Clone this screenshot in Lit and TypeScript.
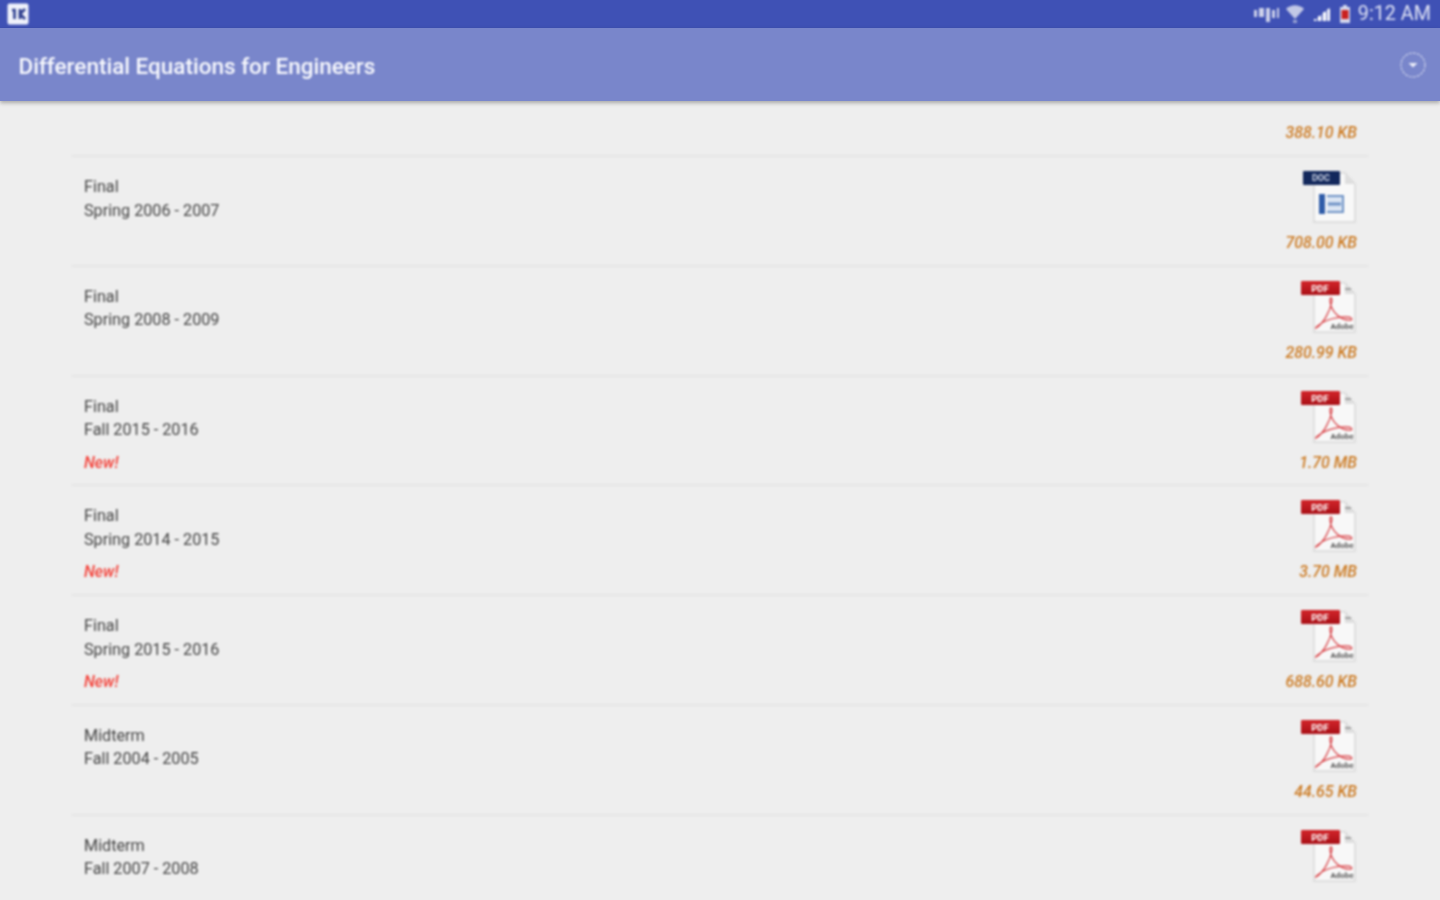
import { LitElement, html, css, svg } from "lit";
import { customElement } from "lit/decorators.js";

type Row = { kind: string; term: string; size: string; type: "pdf" | "doc"; isNew?: boolean };

const rows: Row[] = [
  { kind: "Final", term: "Spring 2006 - 2007", size: "708.00 KB", type: "doc" },
  { kind: "Final", term: "Spring 2008 - 2009", size: "280.99 KB", type: "pdf" },
  { kind: "Final", term: "Fall 2015 - 2016", size: "1.70 MB", type: "pdf", isNew: true },
  { kind: "Final", term: "Spring 2014 - 2015", size: "3.70 MB", type: "pdf", isNew: true },
  { kind: "Final", term: "Spring 2015 - 2016", size: "688.60 KB", type: "pdf", isNew: true },
  { kind: "Midterm", term: "Fall 2004 - 2005", size: "44.65 KB", type: "pdf" },
  { kind: "Midterm", term: "Fall 2007 - 2008", size: "", type: "pdf" },
];

const sheet = svg`
  <path d="M13 3H44L54 14V52H13Z" fill="#f8f8f8" stroke="#d8d8d8" stroke-width="1.4"/>
  <path d="M44 3V14H54Z" fill="#dedede"/>`;

const pdfIcon = html`<svg class="file" viewBox="0 0 56 54" aria-hidden="true">
  ${sheet}
  <defs>
    <linearGradient id="pdfband" x1="0" y1="0" x2="0" y2="1">
      <stop offset="0" stop-color="#d3262b"/>
      <stop offset="1" stop-color="#a90f16"/>
    </linearGradient>
  </defs>
  <rect x="0" y="1" width="39" height="14" rx="1" fill="url(#pdfband)"/>
  <text x="19" y="11.5" text-anchor="middle" font-size="9.5" font-weight="700" fill="#fff" font-family="Roboto, sans-serif">PDF</text>
  <path d="M44 9h6" stroke="#777" stroke-width="1.2"/>
  <path d="M15 48C22 44 29 32 31 21C31 17 29 17 29 21C30 32 40 41 50 40C52 39 50 37 46 37C38 36 24 40 18 45C15 47 14 49 15 48Z" fill="none" stroke="#d9454a" stroke-width="1.3"/>
  <text x="41" y="48.5" text-anchor="middle" font-size="8" font-weight="700" fill="#555" font-family="Roboto, sans-serif">Adobe</text>
</svg>`;

const docIcon = html`<svg class="file" viewBox="0 0 56 54" aria-hidden="true">
  ${sheet}
  <rect x="2" y="1" width="37" height="14" rx="1" fill="#13285c"/>
  <text x="20" y="11" text-anchor="middle" font-size="9" font-weight="700" fill="#cfd6e6" font-family="Roboto, sans-serif">DOC</text>
  <rect x="18" y="24" width="6" height="20" fill="#2f5ca8"/>
  <path d="M26 26H42V42H26" fill="#dbe5f3" stroke="#6f93c6" stroke-width="2"/>
  <path d="M27 34H40" stroke="#6e93c6" stroke-width="3"/>
</svg>`;

@customElement("app-root")
export class AppRoot extends LitElement {
  static styles = css`
    :host {
      display: block;
      height: 900px;
      overflow: hidden;
      background: #eeeeee;
      font-family: Roboto, "Noto Sans", sans-serif;
    }
    .status {
      height: 28px;
      background: #3f51b5;
      display: flex;
      align-items: center;
      justify-content: space-between;
      padding: 0 9px 0 7px;
      color: #dfe3f4;
    }
    .status-icons { display: flex; align-items: center; filter: blur(0.85px); }
    .status-icons svg { display: block; }
    .sim { width: 27px; height: 18px; margin-right: 5px; }
    .wifi { width: 20px; height: 20px; margin-right: 8px; }
    .signal { width: 18px; height: 16px; margin-right: 8px; }
    .battery { width: 12px; height: 18px; margin-right: 7px; }
    .time { font-size: 19.8px; line-height: 28px; }
    .logo { width: 22px; height: 22px; display: block; filter: blur(0.85px); }
    .bar {
      height: 73px;
      background: #7986cb;
      display: flex;
      align-items: center;
      justify-content: space-between;
      padding: 2px 14px 0 18.5px;
      box-sizing: border-box;
      box-shadow: 0 2px 4px rgba(0, 0, 0, 0.3);
      position: relative;
    }
    .title {
      color: #f8f9fd;
      font-size: 22.5px;
      font-weight: 500;
      filter: blur(0.85px);
    }
    .menu { width: 26px; height: 26px; display: block; filter: blur(0.85px); margin-top: -2px; }
    .list { margin: 0 72px; filter: blur(0.85px); }
    .row {
      box-sizing: border-box;
      height: 109.75px;
      border-bottom: 2px solid #e5e5e5;
      display: flex;
      justify-content: space-between;
      padding: 0 11px 0 12px;
    }
    .row.head { height: 56px; align-items: flex-end; justify-content: flex-end; padding-bottom: 10px; }
    .left { padding-top: 18px; font-size: 16.2px; line-height: 23.7px; color: #444444; }
    .new { color: #f44038; font-style: italic; font-weight: 500; margin-top: 8.6px; font-size: 15.8px; line-height: 24px; }
    .right { display: flex; flex-direction: column; align-items: flex-end; padding-top: 13px; }
    .file { width: 56px; height: 54px; display: block; }
    .size {
      color: #cc7a22;
      font-style: italic;
      font-weight: 500;
      font-size: 15.9px;
      line-height: 24px;
      margin-top: 7px;
    }
    .row.head .size { margin-top: 0; }
  `;

  render() {
    return html`
      <div class="status">
        <svg class="logo" viewBox="0 0 22 22" aria-hidden="true">
          <rect x="0.5" y="0.5" width="21" height="21" rx="2" fill="#f0f2fb"/>
          <path d="M5 7h2.5v9M13 6v10M18 6l-5 5 5 5" fill="none" stroke="#2f3f8f" stroke-width="2.6"/>
        </svg>
        <div class="status-icons">
          <svg class="sim" viewBox="0 0 27 18" aria-hidden="true">
            <path d="M1 5h3v7H1zM6 3h5v9H6zM13 3h4v14h-4zM19 5h3v8h-3zM24 3h2v10h-2z" fill="#cdd2ea"/>
          </svg>
          <svg class="wifi" viewBox="0 0 20 20" aria-hidden="true">
            <path d="M1 5C6 0 14 0 19 5L10 15Z" fill="#c2c8e6"/>
            <path d="M8 16h4v3H8z" fill="#9aa3d4"/>
          </svg>
          <svg class="signal" viewBox="0 0 18 16" aria-hidden="true">
            <path d="M1 15L17 1V15Z" fill="#fff" opacity=".3"/>
            <path d="M1 15h2v-2H1zM5 15h3v-5H5zM10 15h3V6h-3zM14.5 15H17V3h-2.5z" fill="#fff"/>
          </svg>
          <svg class="battery" viewBox="0 0 12 18" aria-hidden="true">
            <path d="M4 0h4v2h3v16H1V2h3z" fill="#d5d9ee"/>
            <rect x="2.5" y="5" width="7" height="9" fill="#c9201f"/>
          </svg>
          <span class="time">9:12 AM</span>
        </div>
      </div>
      <div class="bar">
        <span class="title">Differential Equations for Engineers</span>
        <svg class="menu" viewBox="0 0 26 26" aria-hidden="true">
          <circle cx="13" cy="13" r="12" fill="none" stroke="#c3c9e8" stroke-width="1.3" stroke-dasharray="3 1"/>
          <path d="M8.5 11h9l-4.5 4.5z" fill="#eef0fa"/>
        </svg>
      </div>
      <div class="list">
        <div class="row head"><span class="size">388.10 KB</span></div>
        ${rows.map(
          (r) => html`<div class="row">
            <div class="left">
              <div>${r.kind}</div>
              <div>${r.term}</div>
              ${r.isNew ? html`<div class="new">New!</div>` : ""}
            </div>
            <div class="right">
              ${r.type === "pdf" ? pdfIcon : docIcon}
              ${r.size ? html`<div class="size">${r.size}</div>` : ""}
            </div>
          </div>`
        )}
      </div>
    `;
  }
}
